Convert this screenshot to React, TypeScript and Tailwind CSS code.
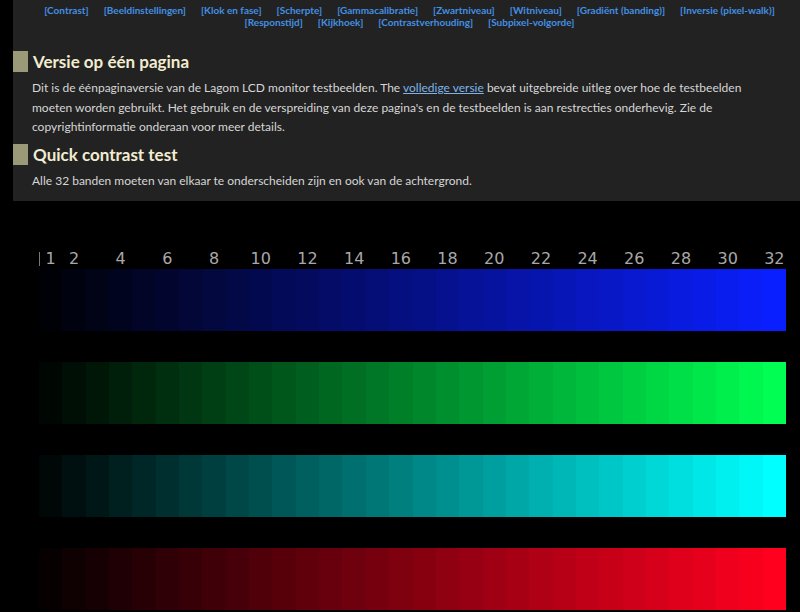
import React from 'react';

const NAV_LINE_1 = [
  'Contrast', 'Beeldinstellingen', 'Klok en fase', 'Scherpte', 'Gammacalibratie',
  'Zwartniveau', 'Witniveau', 'Gradiënt (banding)', 'Inversie (pixel-walk)',
];
const NAV_LINE_2 = ['Responstijd', 'Kijkhoek', 'Contrastverhouding', 'Subpixel-volgorde'];

// kleurverhouding per balk (r, g, b) t.o.v. de niveauwaarde
const RAMPS: [number, number, number][] = [
  [0.04, 0.12, 1],
  [0, 1, 0.32],
  [0, 1, 1],
  [1, 0, 0.12],
];

const bands = Array.from({ length: 32 }, (_, i) => i + 1);

function level(i: number) {
  return Math.round(7 + (248 * (i - 1)) / 31);
}

function SectionTitle({ children }: { children: React.ReactNode }) {
  return (
    <div className="flex items-center gap-[5px] h-[21px]">
      <span className="w-[15px] h-[21px] bg-[#9a9a78] shrink-0" />
      <h2 className="text-[17px] font-bold text-[#f2ecd0] leading-none">{children}</h2>
    </div>
  );
}

function NavLine({ items }: { items: string[] }) {
  return (
    <div className="flex justify-center gap-[15px] leading-[12px]">
      {items.map(t => (
        <a key={t} className="text-[#4390e2] font-bold">[{t}]</a>
      ))}
    </div>
  );
}

export default function App() {
  return (
    <div className="w-[800px] h-[612px] bg-black overflow-hidden font-['Lato','Open_Sans',sans-serif]">
      <div className="ml-[13px] h-[201px] bg-[#222222]">
        <nav className="pt-[4px] pl-[6px] text-[10px]">
          <NavLine items={NAV_LINE_1} />
          <NavLine items={NAV_LINE_2} />
        </nav>

        <div className="mt-[23px]">
          <SectionTitle>Versie op één pagina</SectionTitle>
        </div>
        <p className="ml-[19px] mt-[6px] pr-[30px] text-[12px] leading-[19.5px] text-[#d6d6d6]">
          Dit is de éénpaginaversie van de Lagom LCD monitor testbeelden. The{' '}
          <a className="text-[#7fb3e8] underline">volledige versie</a> bevat uitgebreide uitleg over hoe de testbeelden
          moeten worden gebruikt. Het gebruik en de verspreiding van deze pagina's en de testbeelden is aan restrecties onderhevig. Zie de
          copyrightinformatie onderaan voor meer details.
        </p>

        <div className="mt-[7px]">
          <SectionTitle>Quick contrast test</SectionTitle>
        </div>
        <p className="ml-[19px] mt-[6px] text-[12px] leading-[19.5px] text-[#d6d6d6]">
          Alle 32 banden moeten van elkaar te onderscheiden zijn en ook van de achtergrond.
        </p>
      </div>

      <div className="ml-[39px] w-[747px] pt-[48px]">
        <div className="relative grid grid-cols-[repeat(32,minmax(0,1fr))] h-[19px] font-['DejaVu_Sans',sans-serif] text-[16px] leading-[19px] text-[#a8a8a8]">
          <span className="absolute left-0 top-[3px] w-px h-[14px] bg-[#777]" />
          {bands.map(i => (
            <span key={i} className="flex justify-center">
              {i === 1 || i % 2 === 0 ? i : ''}
            </span>
          ))}
        </div>

        <div className="mt-[1px] flex flex-col gap-[31px]">
          {RAMPS.map((ratio, r) => (
            <div key={r} className="grid grid-cols-[repeat(32,minmax(0,1fr))] h-[62px]">
              {bands.map(i => {
                const v = level(i);
                return (
                  <div
                    key={i}
                    style={{
                      backgroundColor: `rgb(${Math.round(v * ratio[0])}, ${Math.round(v * ratio[1])}, ${Math.round(v * ratio[2])})`,
                    }}
                  />
                );
              })}
            </div>
          ))}
        </div>
      </div>
    </div>
  );
}
